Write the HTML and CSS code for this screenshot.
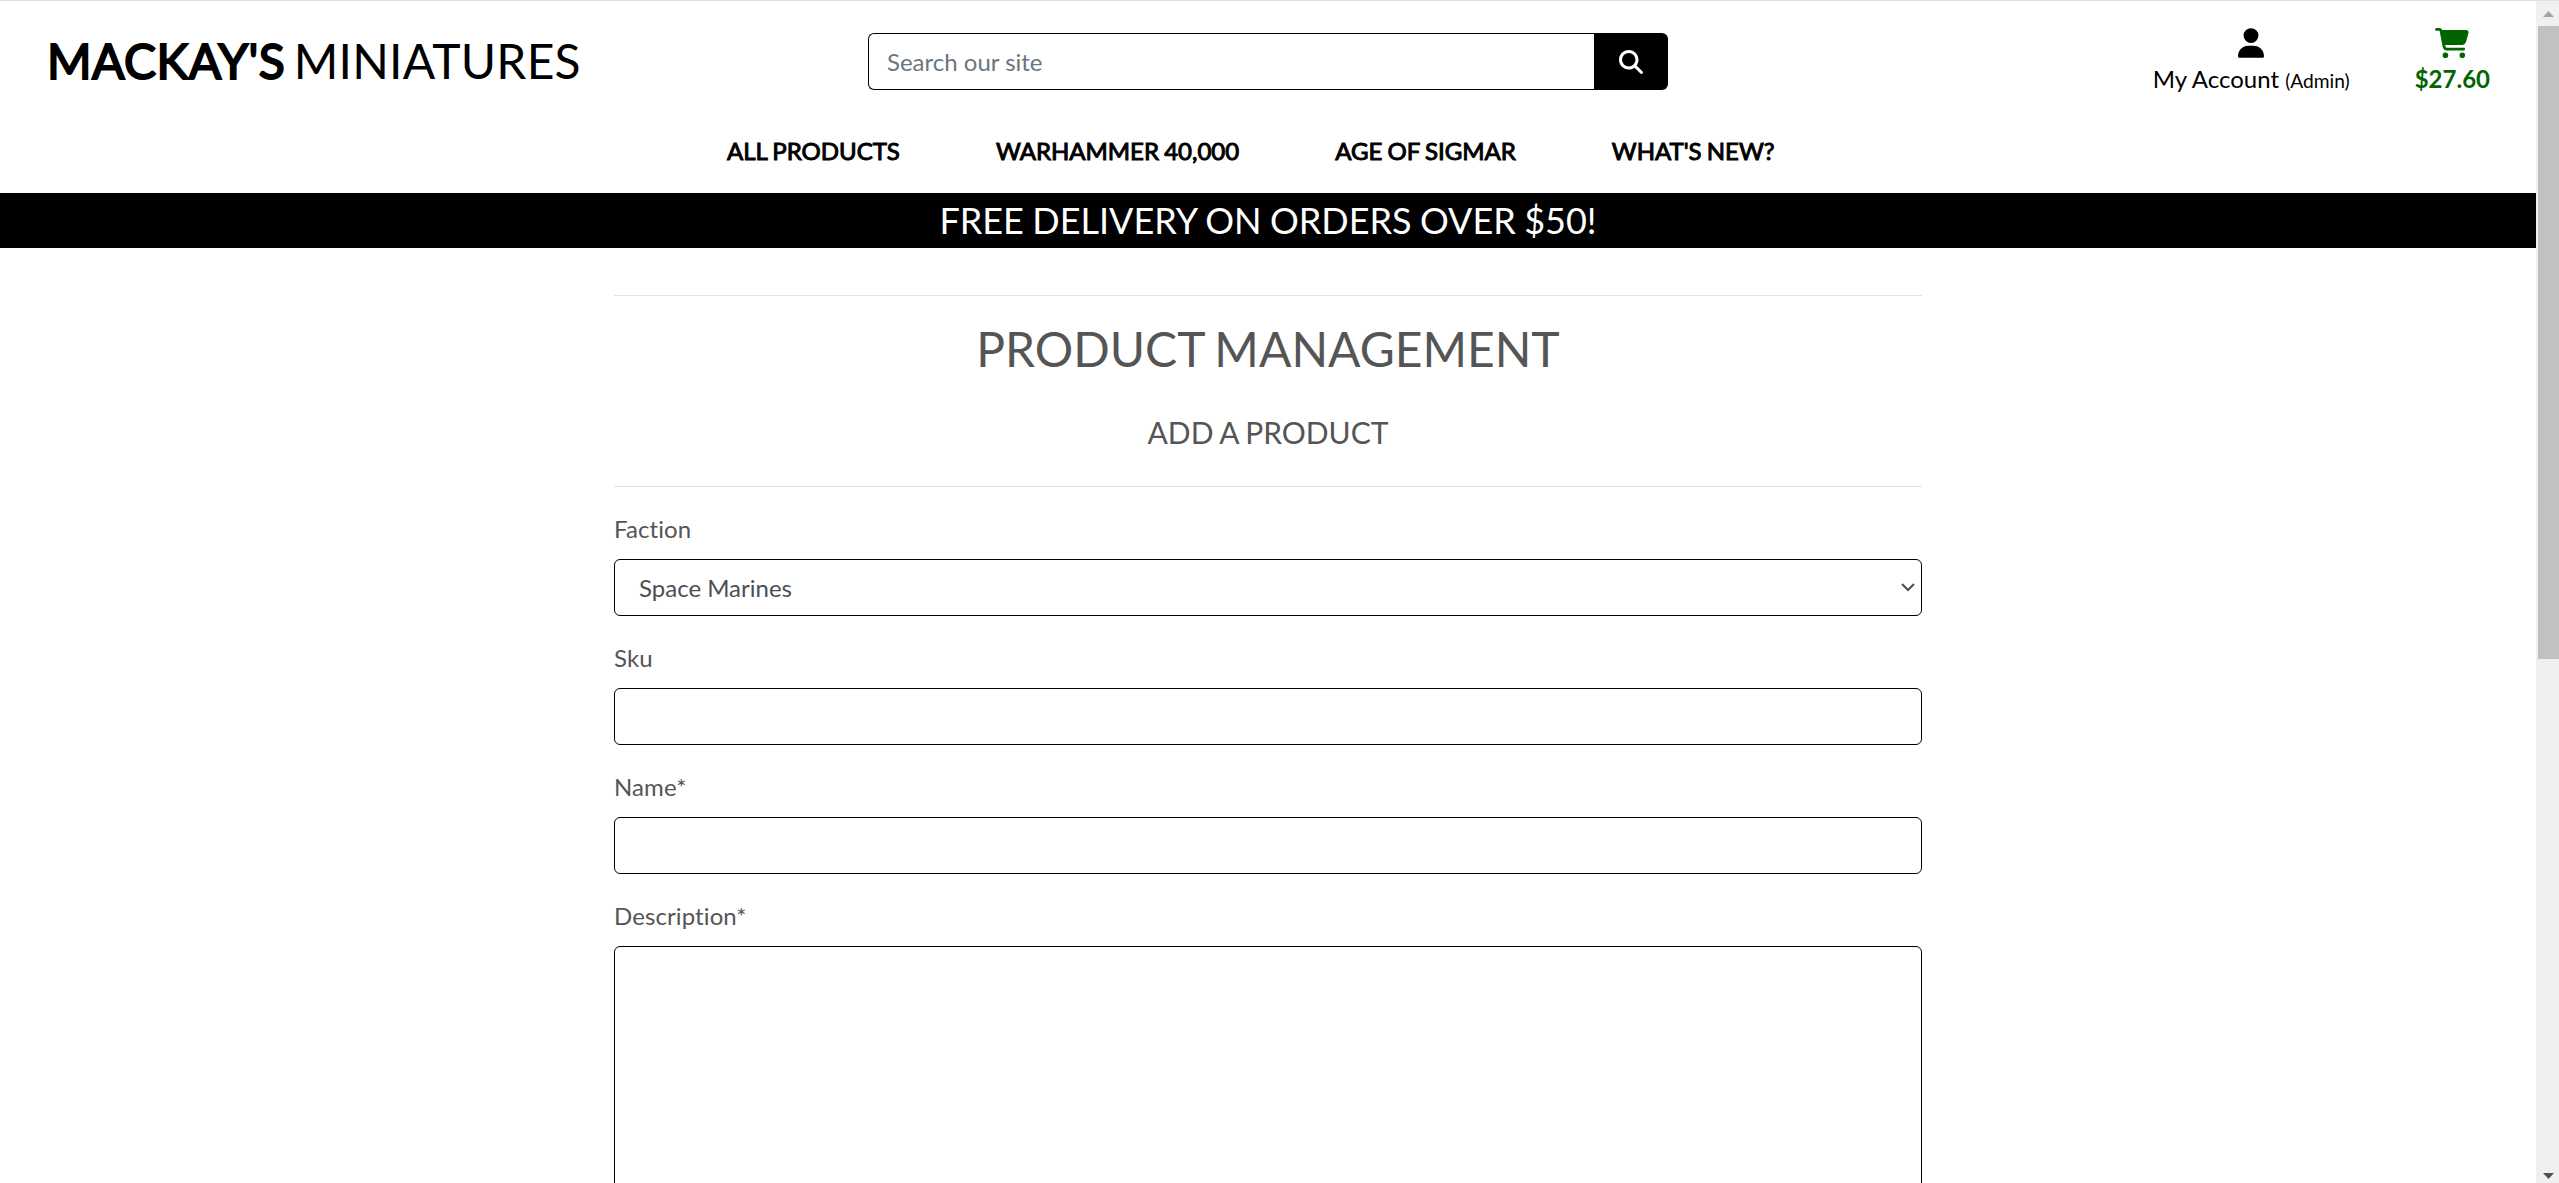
FILE: index.html
```
<!DOCTYPE html>
<html lang="en">
<head>
<meta charset="utf-8">
<title>Mackay's Miniatures</title>
<link rel="stylesheet" href="styles.css">
</head>
<body>
<div class="page">
  <header class="header">
    <a class="logo"><strong>MACKAY'S</strong> MINIATURES</a>
    <form class="search">
      <input class="search-input" type="text" placeholder="Search our site">
      <button class="search-button" type="button" aria-label="Search"><svg viewBox="0 0 512 512"><path d="M416 208c0 45.9-14.9 88.3-40 122.7L502.6 457.4c12.500 12.500 12.500 32.800 0 45.300s-32.800 12.500-45.300 0L330.700 376c-34.400 25.200-76.800 40-122.700 40C93.100 416 0 322.900 0 208S93.100 0 208 0S416 93.100 416 208zM208 352a144 144 0 1 0 0-288 144 144 0 1 0 0 288z"/></svg></button>
    </form>
    <div class="links">
      <a class="account"><svg class="icon-user" viewBox="0 0 448 512"><path d="M224 256A128 128 0 1 0 224 0a128 128 0 1 0 0 256zm-45.700 48C79.800 304 0 383.800 0 482.300C0 498.700 13.300 512 29.700 512H418.300c16.400 0 29.700-13.300 29.700-29.700C448 383.800 368.200 304 269.700 304H178.300z"/></svg><span class="account-label">My Account <small>(Admin)</small></span></a>
      <a class="cart"><svg class="icon-cart" viewBox="0 0 576 512"><path d="M0 24C0 10.700 10.700 0 24 0H69.500c22 0 41.500 12.800 50.600 32h411c26.300 0 45.500 25 38.600 50.400l-41 152.300c-8.500 31.400-37 53.300-69.500 53.300H170.700l5.400 28.500c2.200 11.300 12.100 19.500 23.600 19.500H488c13.300 0 24 10.700 24 24s-10.700 24-24 24H199.700c-34.600 0-64.300-24.600-70.700-58.500L77.400 54.500c-.7-3.800-4-6.500-7.900-6.500H24C10.700 48 0 37.300 0 24zM128 464a48 48 0 1 1 96 0 48 48 0 1 1-96 0zm336-48a48 48 0 1 1 0 96 48 48 0 1 1 0-96z"/></svg><span class="cart-total">$27.60</span></a>
    </div>
  </header>
  <nav class="nav"><a>ALL PRODUCTS</a><a>WARHAMMER 40,000</a><a>AGE OF SIGMAR</a><a>WHAT'S NEW?</a></nav>
  <div class="banner">FREE DELIVERY ON ORDERS OVER $50!</div>
  <main class="content">
    <div class="heading">
      <h2>PRODUCT MANAGEMENT</h2>
      <h5>ADD A PRODUCT</h5>
    </div>
    <div class="group">
      <label>Faction</label>
      <div class="control select">Space Marines<svg class="chevron" viewBox="0 0 14 9"><path d="M1 1l6 6 6-6"/></svg></div>
    </div>
    <div class="group"><label>Sku</label><input class="control" type="text"></div>
    <div class="group"><label>Name*</label><input class="control" type="text"></div>
    <div class="group"><label>Description*</label><textarea class="control area"></textarea></div>
  </main>
</div>
<div class="scrollbar">
  <svg class="arrow up" viewBox="0 0 11 6"><path d="M0 6L5.500 0L11 6z"/></svg>
  <div class="thumb"></div>
  <svg class="arrow down" viewBox="0 0 11 6"><path d="M0 0L5.500 6L11 0z"/></svg>
</div>
</body>
</html>
```
FILE: styles.css
```
* { box-sizing: border-box; }
body {
  margin: 0;
  height: 1183px;
  overflow: hidden;
  display: flex;
  border-top: 1px solid #e0e0e0;
  background: #fff;
  color: #000;
  font: 24px/36px Lato, sans-serif;
  font-variant-ligatures: none;
}
.page { flex: 1; min-width: 0; height: 1182px; overflow: hidden; }
.header {
  display: grid;
  grid-template-columns: 868px 800px 1fr;
  height: 120px;
}
.logo { padding: 31px 0 0 47px; font-size: 48px; line-height: 58px; white-space: nowrap; word-spacing: -4px; letter-spacing: 0.250px; }
.logo strong { font-weight: 400; -webkit-text-stroke: 2px #000; letter-spacing: 0.400px; }
.search { display: flex; height: 57px; margin-top: 32px; }
.search-input {
  flex: 1;
  min-width: 0;
  border: 1px solid #000;
  border-right: 0;
  border-radius: 6px 0 0 6px;
  padding: 0 18px;
  font: inherit;
  outline: 0;
}
.search-input::placeholder { color: #6c757d; opacity: 1; }
.search-button {
  width: 74px;
  border: 0;
  border-radius: 0 6px 6px 0;
  background: #000;
  display: flex;
  align-items: center;
  justify-content: center;
  padding: 0;
}
.search-button svg { width: 24px; height: 24px; fill: #fff; }
.links { display: flex; justify-content: flex-end; padding: 27px 46px 0 0; gap: 65px; }
.account, .cart { display: flex; flex-direction: column; align-items: center; white-space: nowrap; }
.icon-user { width: 26px; height: 30px; }
.icon-cart { width: 34px; height: 30px; fill: #006400; }
.account-label, .cart-total { margin-top: 3px; }
.account-label small { font-size: 19.200px; }
.cart-total { color: #006400; font-weight: 700; }
.nav {
  display: flex;
  gap: 96px;
  height: 72px;
  padding: 12px 0 0 727px;
  -webkit-text-stroke: 1px #000;
  word-spacing: -1px;
  white-space: nowrap;
}
.banner {
  height: 55px;
  background: #000;
  color: #fff;
  font-size: 36px;
  line-height: 55px;
  text-align: center;
  word-spacing: -0.800px;
}
.content { width: 1308px; margin: 47px auto 0; color: #555; }
.heading {
  height: 192px;
  border: solid #e3e3e3;
  border-width: 1px 0;
  text-align: center;
}
h2 { margin: 24px 0 0; font-size: 48px; line-height: 58px; font-weight: 400; word-spacing: -2px; }
h5 { margin: 36px 0 0; font-size: 30px; line-height: 36px; font-weight: 400; word-spacing: -1px; }
.group { margin-top: 24px; }
.group label { display: block; height: 48px; letter-spacing: 0.100px; }
.control {
  display: block;
  width: 100%;
  height: 57px;
  border: 1px solid #000;
  border-radius: 6px;
  background: #fff;
  color: #495057;
  font: inherit;
  outline: 0;
}
.select { display: flex; align-items: center; justify-content: space-between; padding: 0 6px 0 24px; }
.chevron { width: 14px; height: 9px; fill: none; stroke: #495057; stroke-width: 2; }
.area { height: 360px; resize: none; }
.scrollbar {
  width: 23px;
  height: 1182px;
  background: #f0f0f0;
  display: flex;
  flex-direction: column;
  padding: 10px 0 4px 2px;
}
.arrow { width: 11px; height: 6px; margin-left: 5px; fill: #505050; }
.up { fill: #a3a3a3; }
.thumb { height: 633px; margin: 9px 0 auto; background: #c1c1c1; }
```
